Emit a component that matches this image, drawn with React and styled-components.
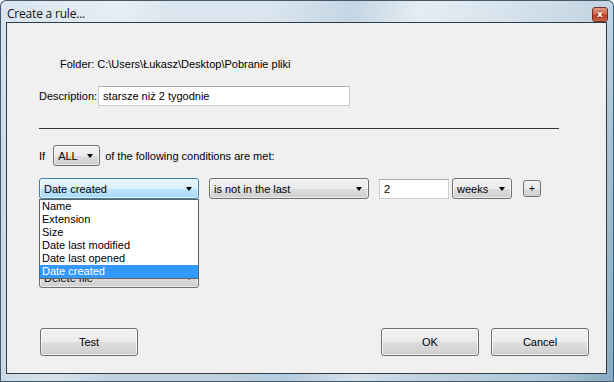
import React from "react";
import styled, { createGlobalStyle } from "styled-components";

const GlobalStyle = createGlobalStyle`
	html, body {
		margin: 0;
		padding: 0;
		background: #ffffff;
	}
	body {
		font-family: "Liberation Sans", Arial, sans-serif;
		font-size: 11px;
		color: #000000;
	}
`;

const Window = styled.div`
	box-sizing: border-box;
	width: 614px;
	height: 382px;
	display: flex;
	flex-direction: column;
	border: 1px solid #44596a;
	border-right-color: #2b6584;
	border-radius: 6px 6px 0 0;
	background:
		linear-gradient(100deg,
			rgba(255, 255, 255, 0) 0%,
			rgba(255, 255, 255, 0.35) 18%,
			rgba(255, 255, 255, 0) 26%,
			rgba(255, 255, 255, 0) 40%,
			rgba(170, 195, 215, 0.45) 52%,
			rgba(255, 255, 255, 0.3) 62%,
			rgba(255, 255, 255, 0) 72%,
			rgba(150, 180, 200, 0.35) 90%,
			rgba(80, 130, 160, 0.5) 100%),
		linear-gradient(180deg, #dbe6ef 0%, #c9d9e6 40%, #bfd2e0 100%);
	overflow: hidden;
`;

const TitleBar = styled.div`
	height: 21px;
	display: flex;
	align-items: center;
	justify-content: space-between;
	padding: 0 5px 0 6px;
	flex-shrink: 0;
`;

const Title = styled.span`
	font-family: "Open Sans", "Noto Sans", sans-serif;
	font-size: 12px;
	letter-spacing: -0.2px;
	color: #111111;
	margin-top: 3px;
`;

const CloseButton = styled.div`
	box-sizing: border-box;
	width: 16px;
	height: 15px;
	margin-top: 6px;
	border: 1px solid #6e3328;
	border-radius: 3px;
	background: linear-gradient(180deg, #e49a84 0%, #cf5f45 50%, #b8381f 55%, #d0634a 100%);
	display: flex;
	align-items: center;
	justify-content: center;
	color: #ffffff;
	font-family: "DejaVu Sans", sans-serif;
	font-weight: bold;
	font-size: 9px;
	line-height: 1;
	text-shadow: 0 0 2px #5a1a0c;
`;

const Client = styled.div`
	flex: 1;
	margin: 0 6px 7px 5px;
	border: 1px solid #2f3d48;
	background: #f0f0f0;
	display: flex;
	flex-direction: column;
	padding: 0 17px 0 32px;
`;

const Row = styled.div`
	display: flex;
	align-items: center;
	margin-top: ${(p) => p.$top}px;
	height: ${(p) => p.$h}px;
`;

const Label = styled.span`
	white-space: nowrap;
	margin-left: ${(p) => p.$indent || 0}px;
`;

const TextBox = styled.div`
	box-sizing: border-box;
	width: ${(p) => p.$w}px;
	height: ${(p) => p.$h || 20}px;
	background: #ffffff;
	border: 1px solid #c9ccd2;
	border-top-color: #abadb3;
	display: flex;
	align-items: center;
	padding-left: 4px;
	white-space: nowrap;
	margin-left: ${(p) => p.$ml || 0}px;
`;

const Separator = styled.div`
	margin-top: 22px;
	width: 520px;
	height: 1px;
	background: #333333;
`;

const ComboWrap = styled.div`
	position: relative;
	margin-left: ${(p) => p.$ml || 0}px;
`;

const Combo = styled.div`
	box-sizing: border-box;
	width: ${(p) => p.$w}px;
	height: 21px;
	border: 1px solid ${(p) => (p.$focused ? "#3c7fb1" : "#707070")};
	border-radius: 3px;
	background: ${(p) =>
		p.$focused
			? "linear-gradient(180deg, #eaf6fd 0%, #d9f0fc 50%, #bee6fd 51%, #a7d9f5 100%)"
			: "linear-gradient(180deg, #f2f2f2 0%, #ebebeb 50%, #dddddd 51%, #cfcfcf 100%)"};
	box-shadow: inset 0 0 0 1px rgba(255, 255, 255, 0.6);
	display: flex;
	align-items: center;
	justify-content: space-between;
	padding: 0 6px 0 4px;
	white-space: nowrap;
`;

const Arrow = styled.span`
	width: 0;
	height: 0;
	border-left: 3.5px solid transparent;
	border-right: 3.5px solid transparent;
	border-top: 4px solid #000000;
	margin-top: 1px;
`;

const DropList = styled.div`
	position: absolute;
	top: 100%;
	left: 0;
	box-sizing: border-box;
	width: 160px;
	border: 1px solid #646464;
	background: #ffffff;
	z-index: 5;
`;

const DropItem = styled.div`
	height: 13px;
	line-height: 13px;
	padding-left: 2px;
	white-space: nowrap;
	background: ${(p) => (p.$selected ? "#3399ff" : "transparent")};
	color: ${(p) => (p.$selected ? "#ffffff" : "#000000")};
`;

const SmallButton = styled.div`
	box-sizing: border-box;
	width: 18px;
	height: 17px;
	margin-left: 11px;
	border: 1px solid #707070;
	border-radius: 3px;
	background: linear-gradient(180deg, #f2f2f2 0%, #ebebeb 50%, #dddddd 51%, #cfcfcf 100%);
	display: flex;
	align-items: center;
	justify-content: center;
	font-size: 10px;
`;

const ButtonRow = styled.div`
	display: flex;
	justify-content: space-between;
	margin-top: 40px;
	padding-left: 1px;
`;

const ButtonGroup = styled.div`
	display: flex;
	gap: 12px;
`;

const Button = styled.div`
	box-sizing: border-box;
	width: 98px;
	height: 28px;
	border: 1px solid #707070;
	border-radius: 3px;
	background: linear-gradient(180deg, #f2f2f2 0%, #ebebeb 50%, #dddddd 51%, #cfcfcf 100%);
	box-shadow: inset 0 0 0 1px rgba(255, 255, 255, 0.7);
	display: flex;
	align-items: center;
	justify-content: center;
`;

const fields = ["Name", "Extension", "Size", "Date last modified", "Date last opened", "Date created"];

export default function App() {
	return (
		<>
			<GlobalStyle />
			<Window>
				<TitleBar>
					<Title>Create a rule...</Title>
					<CloseButton>x</CloseButton>
				</TitleBar>
				<Client>
					<Row $top={34} $h={14}>
						<Label $indent={21}>Folder: C:\Users\Łukasz\Desktop\Pobranie pliki</Label>
					</Row>
					<Row $top={15} $h={20}>
						<Label>Description:</Label>
						<TextBox $w={252} $ml={1}>starsze niż 2 tygodnie</TextBox>
					</Row>
					<Separator />
					<Row $top={16} $h={21}>
						<Label>If</Label>
						<ComboWrap $ml={8}>
							<Combo $w={47}>
								ALL <Arrow />
							</Combo>
						</ComboWrap>
						<Label $indent={5}>of the following conditions are met:</Label>
					</Row>
					<Row $top={12} $h={21}>
						<ComboWrap>
							<Combo $w={160} $focused>
								Date created <Arrow />
							</Combo>
							<DropList>
								{fields.map((f, i) => (
									<DropItem key={f} $selected={i === fields.length - 1}>
										{f}
									</DropItem>
								))}
							</DropList>
						</ComboWrap>
						<ComboWrap $ml={10}>
							<Combo $w={160}>
								is not in the last <Arrow />
							</Combo>
						</ComboWrap>
						<TextBox $w={70} $h={20} $ml={10}>
							2
						</TextBox>
						<ComboWrap $ml={3}>
							<Combo $w={60}>
								weeks <Arrow />
							</Combo>
						</ComboWrap>
						<SmallButton>+</SmallButton>
					</Row>
					<Row $top={68} $h={21}>
						<ComboWrap>
							<Combo $w={160}>
								Delete file <Arrow />
							</Combo>
						</ComboWrap>
					</Row>
					<ButtonRow>
						<Button>Test</Button>
						<ButtonGroup>
							<Button>OK</Button>
							<Button>Cancel</Button>
						</ButtonGroup>
					</ButtonRow>
				</Client>
			</Window>
		</>
	);
}
